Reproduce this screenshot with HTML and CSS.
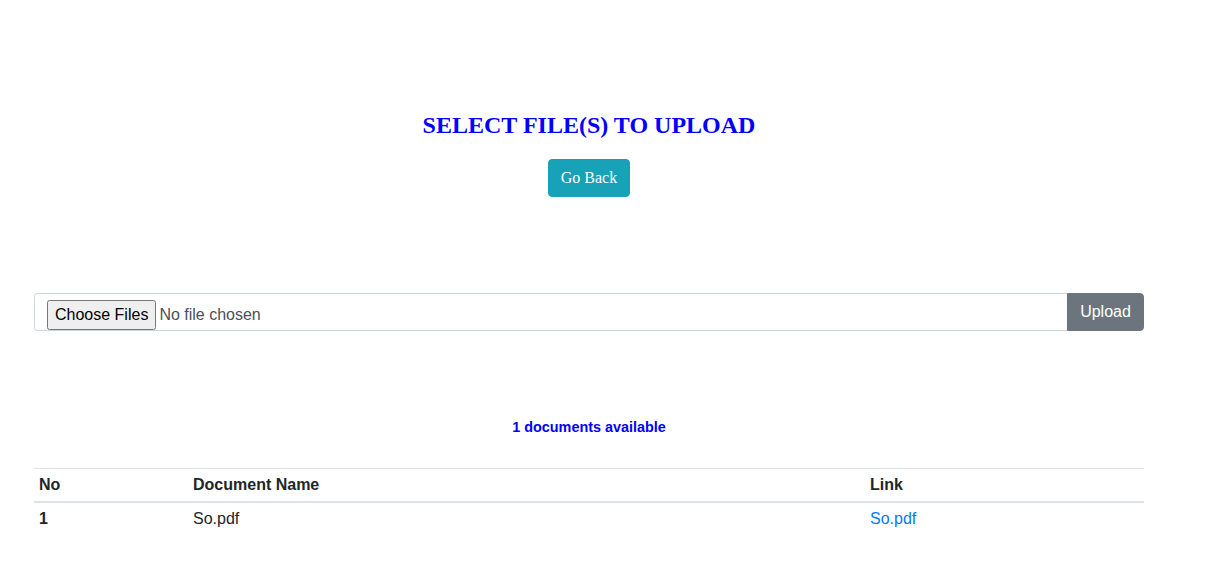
FILE: index.html
```html
<!DOCTYPE html>
<html>
<head>
<meta charset="utf-8">
<link rel="stylesheet" href="styles.css">
</head>
<body>
<div class="page">
  <header class="top">
    <h2 class="title">SELECT FILE(S) TO UPLOAD</h2>
    <button class="btn-back" type="button">Go Back</button>
  </header>
  <form class="upload">
    <div class="field"><input class="file" type="file" multiple></div>
    <button class="btn-upload" type="button">Upload</button>
  </form>
  <p class="count">1 documents available</p>
  <table class="docs">
    <thead>
      <tr><th class="c-no">No</th><th class="c-name">Document Name</th><th class="c-link">Link</th></tr>
    </thead>
    <tbody>
      <tr><th>1</th><td>So.pdf</td><td><a href="#">So.pdf</a></td></tr>
    </tbody>
  </table>
</div>
</body>
</html>
```
FILE: styles.css
```css
html, body { margin: 0; padding: 0; background: #fff; }
body { font-family: "Liberation Sans", Arial, sans-serif; color: #212529; font-size: 16px; line-height: 1.5; }
.page { width: 1110px; margin-left: 34px; padding-top: 111px; }
.top { display: flex; flex-direction: column; align-items: center; }
.title { margin: 0; font-family: "Liberation Serif", "Times New Roman", serif; font-weight: bold; font-size: 24px; line-height: 29px; color: #0000ff; }
.btn-back { margin-top: 19px; height: 38px; padding: 0 12px; border: 1px solid #17a2b8; background: #17a2b8; color: #fff; border-radius: 4px; font-family: "Liberation Serif", "Times New Roman", serif; font-size: 16px; }
.upload { display: flex; margin-top: 96px; height: 38px; }
.field { flex: 1; border: 1px solid #ced4da; border-right: none; border-radius: 4px 0 0 4px; padding: 0 12px; display: flex; align-items: flex-end; }
.file { font-family: "Liberation Sans", Arial, sans-serif; font-size: 16px; color: #495057; height: 30px; }
.file::file-selector-button { height: 30px; padding: 0 6px; margin-right: 3px; font-family: "Liberation Sans", Arial, sans-serif; font-size: 16px; }
.btn-upload { width: 77px; border: 1px solid #6c757d; background: #6c757d; color: #fff; border-radius: 0 4px 4px 0; font-family: "Liberation Sans", Arial, sans-serif; font-size: 16px; padding: 0 12px; }
.count { margin: 85px 0 0; text-align: center; color: #0000ff; font-weight: bold; font-size: 14.4px; line-height: 22px; }
.docs { margin-top: 30px; width: 100%; border-collapse: collapse; }
.docs th, .docs td { text-align: left; padding: 4px 5px; border-top: 1px solid #dee2e6; line-height: 24px; }
.docs thead th { border-bottom: 2px solid #dee2e6; }
.docs tbody th, .docs tbody td { border-top: none; padding-top: 4px; }
.c-no { width: 144px; }
.c-name { width: 667px; }
.docs a { color: #007bff; text-decoration: none; }
```
